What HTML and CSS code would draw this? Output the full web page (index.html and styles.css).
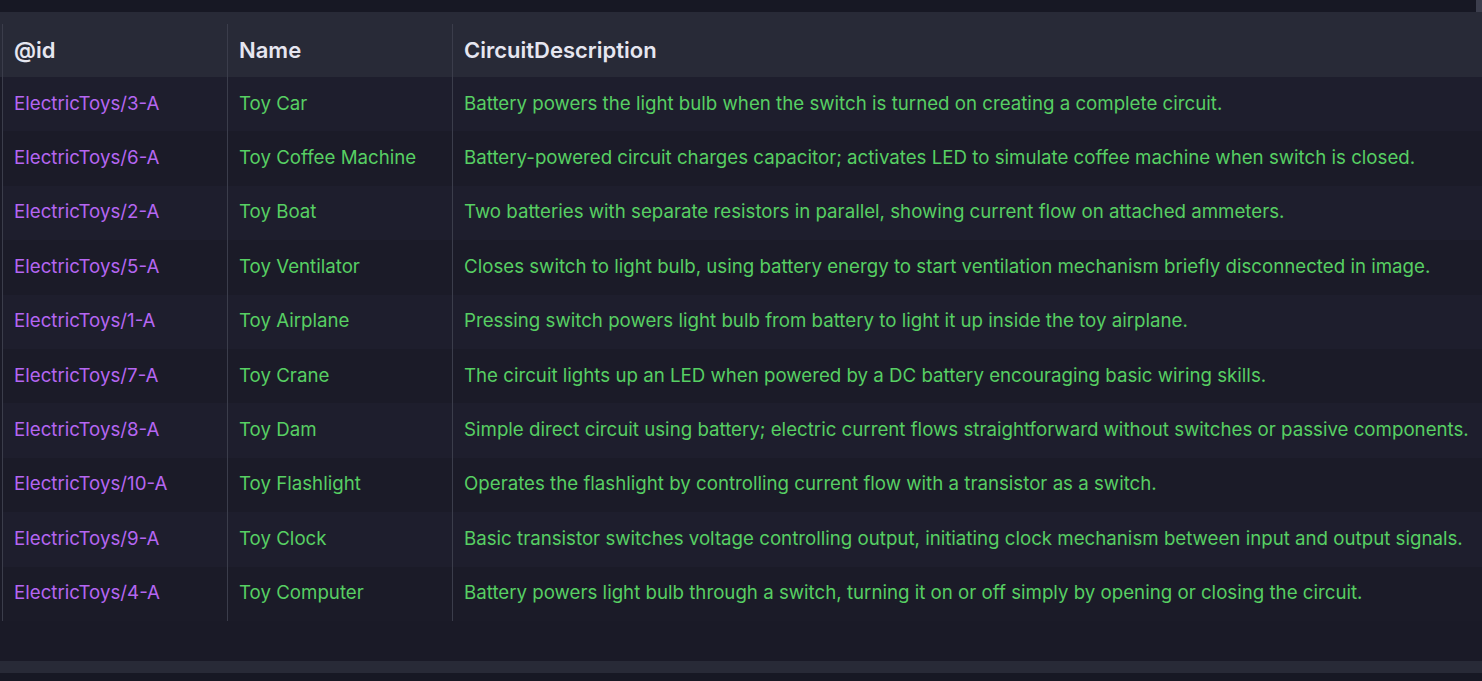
FILE: index.html
```html
<!DOCTYPE html>
<html>
<head>
<meta charset="utf-8">
<link rel="stylesheet" href="styles.css">
</head>
<body>
<div class="topbar"><div class="thumb"></div></div>
<div class="panel">
  <div class="grid">
    <div class="row head">
      <div class="cell">@id</div>
      <div class="cell">Name</div>
      <div class="cell">CircuitDescription</div>
    </div>
    <div class="row"><div class="cell id">ElectricToys/3-A</div><div class="cell val">Toy Car</div><div class="cell val">Battery powers the light bulb when the switch is turned on creating a complete circuit.</div></div>
    <div class="row"><div class="cell id">ElectricToys/6-A</div><div class="cell val">Toy Coffee Machine</div><div class="cell val">Battery-powered circuit charges capacitor; activates LED to simulate coffee machine when switch is closed.</div></div>
    <div class="row"><div class="cell id">ElectricToys/2-A</div><div class="cell val">Toy Boat</div><div class="cell val">Two batteries with separate resistors in parallel, showing current flow on attached ammeters.</div></div>
    <div class="row"><div class="cell id">ElectricToys/5-A</div><div class="cell val">Toy Ventilator</div><div class="cell val">Closes switch to light bulb, using battery energy to start ventilation mechanism briefly disconnected in image.</div></div>
    <div class="row"><div class="cell id">ElectricToys/1-A</div><div class="cell val">Toy Airplane</div><div class="cell val">Pressing switch powers light bulb from battery to light it up inside the toy airplane.</div></div>
    <div class="row"><div class="cell id">ElectricToys/7-A</div><div class="cell val">Toy Crane</div><div class="cell val">The circuit lights up an LED when powered by a DC battery encouraging basic wiring skills.</div></div>
    <div class="row"><div class="cell id">ElectricToys/8-A</div><div class="cell val">Toy Dam</div><div class="cell val">Simple direct circuit using battery; electric current flows straightforward without switches or passive components.</div></div>
    <div class="row"><div class="cell id">ElectricToys/10-A</div><div class="cell val">Toy Flashlight</div><div class="cell val">Operates the flashlight by controlling current flow with a transistor as a switch.</div></div>
    <div class="row"><div class="cell id">ElectricToys/9-A</div><div class="cell val">Toy Clock</div><div class="cell val">Basic transistor switches voltage controlling output, initiating clock mechanism between input and output signals.</div></div>
    <div class="row"><div class="cell id">ElectricToys/4-A</div><div class="cell val">Toy Computer</div><div class="cell val">Battery powers light bulb through a switch, turning it on or off simply by opening or closing the circuit.</div></div>
  </div>
  <div class="spacer"></div>
  <div class="hbar"></div>
  <div class="bottom"></div>
</div>
</body>
</html>
```
FILE: styles.css
```css
html, body {
  margin: 0;
  padding: 0;
  background: #1a1a27;
  overflow: hidden;
  font-family: "Inter", "Open Sans", sans-serif;
}
.topbar {
  height: 12px;
  background: #171824;
  display: flex;
  justify-content: flex-end;
}
.thumb {
  width: 6px;
  height: 12px;
  background: #3c3e4d;
}
.panel {
  display: flex;
  flex-direction: column;
  overflow: hidden;
}
.grid {
  background: linear-gradient(#282a37 0, #282a37 65px, transparent 65px);
  padding-top: 12px;
  padding-left: 2px;
}
.row {
  display: grid;
  grid-template-columns: 225px 225px 1fr;
  height: 54.4px;
  font-size: 18.7px;
}
.row:nth-child(even) { background: #1e1e2d; }
.row:nth-child(odd) { background: #1b1b28; }
.row.head {
  background: #282a37;
  height: 53px;
  font-weight: 600;
  color: #e6e6f0;
  font-size: 22px;
}
.cell {
  border-left: 1px solid #3b3d4b;
  padding-left: 11px;
  padding-bottom: 2px;
  box-sizing: border-box;
  display: flex;
  align-items: center;
  white-space: nowrap;
  overflow: hidden;
}
.id { color: #b566f2; }
.val { color: #57cf63; }
.spacer { height: 40px; background: #1a1a27; }
.hbar { height: 12px; background: #282a37; }
.bottom { height: 9px; background: #171824; }
```
